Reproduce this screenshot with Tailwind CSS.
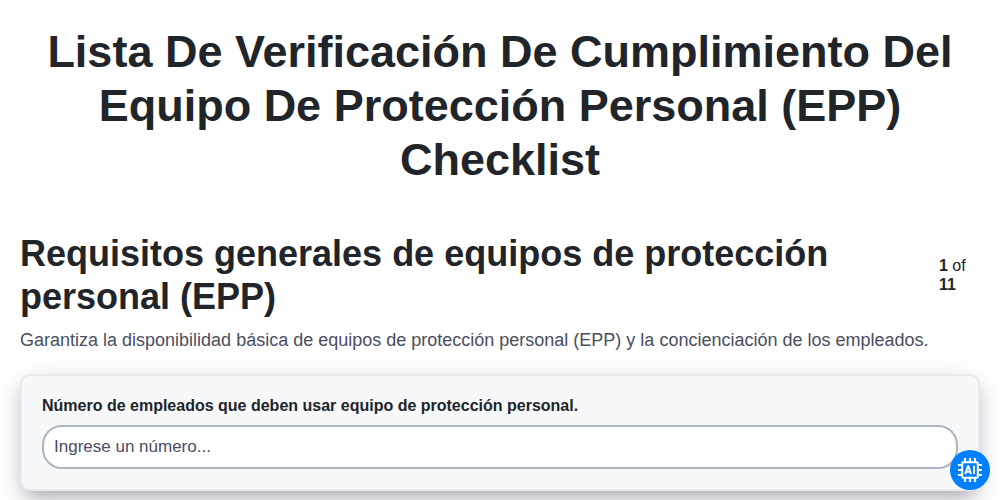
<!DOCTYPE html>
<html lang="es">
<head>
  <meta charset="UTF-8" />
  <meta name="viewport" content="width=device-width, initial-scale=1.0" />
  <title>Lista De Verificación De Cumplimiento Del Equipo De Protección Personal (EPP)</title>
  <script src="https://cdn.jsdelivr.net/npm/@tailwindcss/browser@4"></script>
</head>
<body class="h-screen overflow-hidden bg-white px-5 pt-[25px] font-['Liberation_Sans',Arial,sans-serif] text-[#212529]">

  <h1 class="text-center text-[45px] leading-[54px] font-bold">Lista De Verificación De Cumplimiento Del Equipo De Protección Personal (EPP) Checklist</h1>

  <main class="mt-[45px]">
    <div class="flex items-center justify-between">
      <h2 class="w-[880px] text-[36px] leading-[43px] font-bold">Requisitos generales de equipos de protección personal (EPP)</h2>
      <div class="w-[41px] text-base leading-[19px]"><b>1</b> of <b>11</b></div>
    </div>
    <p class="mt-[9px] text-lg leading-[27px] text-[#4a4e60]">Garantiza la disponibilidad básica de equipos de protección personal (EPP) y la concienciación de los empleados.</p>

    <div class="mt-5 h-[117px] rounded-[10px] border-2 border-[#e9e9f0] bg-[#f6f8fa] px-5 pt-5 shadow-[0_7px_29px_0_rgba(100,100,111,0.2),0_10px_18px_-6px_rgba(45,35,66,0.35)]">
      <label for="employees" class="block text-base leading-5 font-bold">Número de empleados que deben usar equipo de protección personal.</label>
      <input id="employees" type="text" placeholder="Ingrese un número..." class="mt-[9px] block h-11 w-full rounded-[20px] border-2 border-[#adb5bd] bg-white px-2.5 text-[17px] placeholder:text-[#4a4e60]" />
    </div>
  </main>

  <button aria-label="AI" class="fixed right-2.5 bottom-2.5 flex size-10 items-center justify-center rounded-full bg-[#0080ff] text-white">
    <svg class="size-[26px]" viewBox="-.5 -.5 26 26" fill="none" stroke="currentColor">
      <rect x="4.7" y="4.7" width="15.6" height="15.6" rx="1.2" stroke-width="2" />
      <path stroke-width="2.2" d="M7.5 .5v4M12.5 .5v4M17.5 .5v4M7.5 20.5v4M12.5 20.5v4M17.5 20.5v4M.5 7.5h4M.5 12.5h4M.5 17.5h4M20.5 7.5h4M20.5 12.5h4M20.5 17.5h4" />
      <path stroke-width="1.9" stroke-linejoin="round" d="M7.7 16.6l2.7-8h.5l2.7 8M8.8 14.2h3.7M16.5 8.2v8.4" />
    </svg>
  </button>

</body>
</html>
